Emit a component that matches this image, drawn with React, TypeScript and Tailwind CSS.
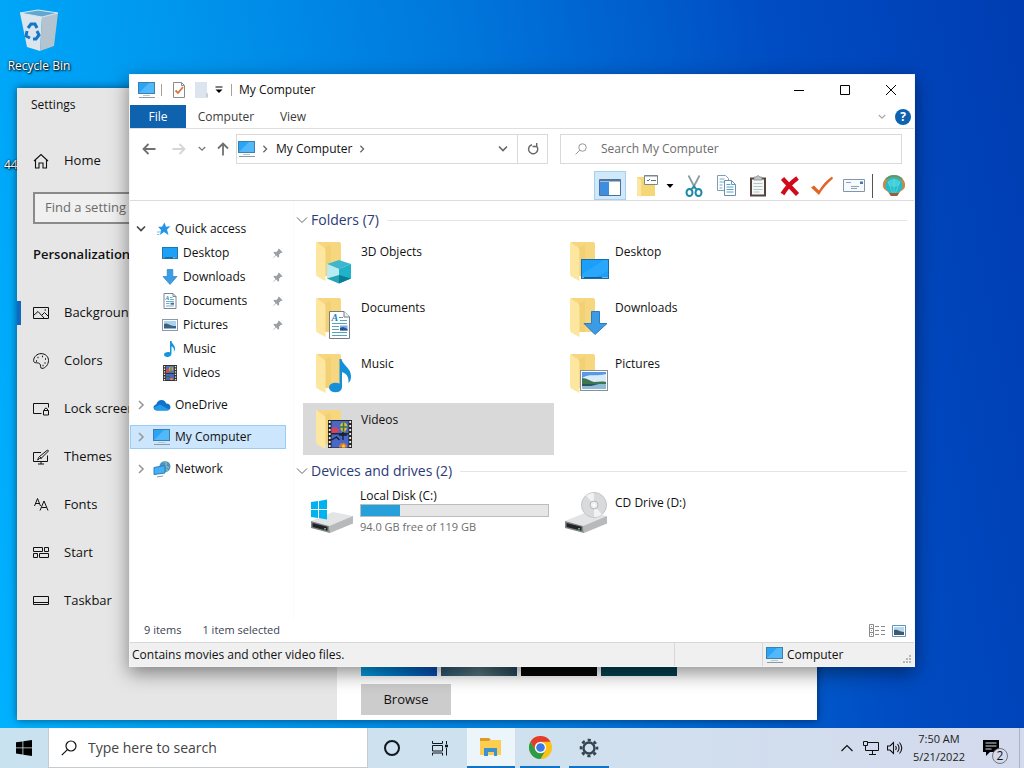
import type { ReactNode } from "react";

interface IconProps {
  className?: string;
}

function MonitorIcon({ className = "h-5 w-5" }: IconProps) {
  return (
    <svg viewBox="0 0 20 20" className={className} aria-hidden="true">
      <rect x="1.5" y="2.5" width="16" height="11" fill="#2aa5f5" stroke="#3f7fae" />
      <path d="M2 13 L12 3 H17 V13 Z" fill="#6cc5fb" opacity="0.6" />
      <path d="M6 15.5h7" stroke="#b9c6cf" />
      <path d="M2 17.5h16" stroke="#8b9aa5" />
    </svg>
  );
}

function Chevron({ className = "h-2 w-2", dir = "down" }: IconProps & { dir?: "down" | "right" }) {
  const paths = { down: "M1 2.5 5 6.5 9 2.5", right: "M3 1 7 5 3 9" };
  return (
    <svg viewBox="0 0 10 10" className={className} fill="none" stroke="currentColor" strokeWidth="1.6" aria-hidden="true">
      <path d={paths[dir]} />
    </svg>
  );
}

function Arrow({ rotate = "" }: { rotate?: string }) {
  return (
    <svg viewBox="0 0 14 14" className={`h-3.5 w-3.5 ${rotate}`} fill="none" stroke="currentColor" strokeWidth="1.8" aria-hidden="true">
      <path d="M13.5 7H1.5M6.5 2 1.5 7l5 5" />
    </svg>
  );
}

function SearchIcon({ className }: IconProps) {
  return (
    <svg viewBox="0 0 16 16" className={className} fill="none" stroke="currentColor" strokeWidth="1.2" aria-hidden="true">
      <circle cx="10" cy="6" r="5" />
      <path d="M6.4 9.6.8 15.2" />
    </svg>
  );
}

function PictureGlyph() {
  return (
    <>
      <rect x="0.5" y="2.5" width="15" height="11" fill="#fff" stroke="#8d9aa5" />
      <rect x="2" y="4" width="12" height="8" fill="#a9d3f2" />
      <path d="M2 7c3-2 5 2 12 2v3H2z" fill="#3f617c" />
      <path d="M2 11h12v1H2z" fill="#88b6d6" />
    </>
  );
}

function FilmGlyph() {
  return (
    <>
      <path d="M1 0h14v16H1z" fill="#333" />
      <path d="M4 1h8v7H4z" fill="#4b72c8" />
      <path d="M4 9h8v6H4z" fill="#4967bd" />
      <path d="M4 5l3-2 1 3-3 2H4z" fill="#cf4c55" />
      <ellipse cx="9" cy="4" rx="2" ry="2.4" fill="#e2b12f" />
      <path d="M9 1.6v5M4 12l3-1 1 2" stroke="#2d6d45" fill="none" />
      <path d="M8 15c0-3 3-3 3 0z" fill="#e8862e" />
      <path d="M2.5 1v15M13.5 1v15" stroke="#f2ecd6" strokeWidth="1.3" strokeDasharray="1.3 1.3" />
    </>
  );
}

function DocGlyph() {
  return (
    <>
      <path d="M2 .5h9L14 3.5v12H2z" fill="#fff" stroke="#7b8790" />
      <path d="M11 .5v3h3" fill="none" stroke="#7b8790" />
      <text x="3.2" y="7" fontSize="6" fontWeight="700" fontStyle="italic" fontFamily="Liberation Serif, serif" fill="#1d86c8">A</text>
      <path d="M8 4.5h2.5M8 6.5h4M4 8.5h8M4 10.5h3.5M4 13h8" stroke="#4f9cba" strokeWidth=".8" />
      <path d="M8.5 9.7h3.5v2H8.5z" fill="#3d6dae" />
    </>
  );
}

function NoteGlyph() {
  return <path d="M8 0h1.5c.4 3 3.5 4 3.5 7.5 0 1.4-.5 2.5-1.2 3.3C12.5 7.6 11 6 9.5 5.6V12.6C9.5 14.6 7.7 16 5.5 16S2 15 2 13.5 4 11 6 11c.8 0 1.5.1 2 .4z" fill="#1496dc" />;
}

function DownGlyph() {
  return <path d="M5.2.5h5.6v7H15L8 15.5 1 7.5h4.2z" fill="#3b9de4" stroke="#2d7fc2" strokeWidth=".7" />;
}

function DesktopGlyph() {
  return (
    <>
      <rect x="0.5" y="2.5" width="15" height="11" fill="#1ba1f7" stroke="#1a78b5" />
      <path d="M1 12.7h14" stroke="#15608f" />
      <path d="M1.5 12.7h1.2M11 12.7h3.5" stroke="#fff" strokeWidth=".8" strokeDasharray=".8 .5" />
    </>
  );
}

// Open folder with a glyph laid over its lower right corner
function FolderIcon({ children }: { children: ReactNode }) {
  return (
    <svg viewBox="0 0 48 48" className="h-12 w-12 shrink-0" aria-hidden="true">
      <path d="M8 5h22q2 0 2 2v32H16z" fill="#f6d77f" />
      <path d="M16 10v29h6V8z" fill="#eecb6a" opacity=".5" />
      <path d="M7 6q0-1 1-.6l7 5q1.5 1 1.5 3V44l-7.5-4q-2-1-2-3z" fill="#fde69f" />
      {children}
    </svg>
  );
}

function CubeOverlay() {
  return (
    <>
      <path d="M30 23l12 4-12 5-12-5z" fill="#3fb6cf" />
      <path d="M18 27l12 5v14.5l-12-5z" fill="#b5ebf2" />
      <path d="M42 27l-12 5v14.5l12-5z" fill="#1fb2c9" />
      <path d="M18 41.5l12-3.500v8.500z" fill="#27a3b5" />
      <path d="M42 41.5l-12-3.500v8.500z" fill="#087f96" />
    </>
  );
}

function DocumentOverlay() {
  return (
    <>
      <path d="M20.5 18.5H35l5.5 5.5v21.5h-20z" fill="#fff" stroke="#737d85" />
      <path d="M35 18.5V24h5.5" fill="#eef2f5" stroke="#737d85" />
      <text x="22.5" y="28" fontSize="10" fontWeight="700" fontStyle="italic" fontFamily="Liberation Serif, serif" fill="#2481b6">A</text>
      <path d="M30 24.5h4M31 27.5h7M23 30.5h15M23 33.5h7M23 36.5h7M23 39.5h15M23 42.5h15" stroke="#5aa3b4" />
      <path d="M31 32.5h7.5v5H31z" fill="#75aee4" />
      <path d="M31 35l3-1 4.5 2v1.5H31z" fill="#29548c" />
    </>
  );
}

function PictureOverlay() {
  return (
    <>
      <rect x="17.5" y="21.5" width="27" height="20" fill="#fff" stroke="#83909b" />
      <rect x="19" y="23" width="24" height="17" fill="#5a98e6" />
      <path d="M19 29c8-5 12-1 24-4v9H19z" fill="#d7ebf9" />
      <path d="M19 29c5 0 8 3 12 4 4 0 7-1 12 0v3H19z" fill="#3d7650" />
      <path d="M19 35h24v5H19z" fill="#8dbcd6" />
      <path d="M19 35h17l-8 2h-9z" fill="#2e5360" />
    </>
  );
}

function DesktopOverlay() {
  return (
    <>
      <rect x="18.5" y="22.5" width="27" height="19" fill="#1b9ffb" stroke="#176ea5" />
      <path d="M19 41V37L41 23h4v11L31 41z" fill="#33aefc" opacity=".6" />
      <path d="M19 40.5h26" stroke="#155e8e" />
      <path d="M19.5 40.5h1M39.5 40.5h5" stroke="#fff" strokeDasharray="1 1" />
    </>
  );
}

function NoteOverlay() {
  return (
    <>
      <ellipse cx="26.5" cy="38.500" rx="6.500" ry="4.800" fill="#148fd9" />
      <path d="M30.500 10h2c1 6 9.500 9 9.500 17 0 3-.5 5-2.500 7 .500-6-2-9.500-6.500-11v15h-2.500z" fill="#148fd9" />
    </>
  );
}

function FilmOverlay() {
  return (
    <>
      <path d="M19 15h24v28H19z" fill="#25252c" />
      <path d="M22.5 16h17v12h-17zM22.5 29.5h17v13h-17z" fill="#4669c8" />
      <path d="M22.5 23l5-1 3 4-4 2h-4z" fill="#d9435a" />
      <path d="M34.5 17.5c4 0 5 5 1.5 9h-3c-3-4-2-9 1.5-9z" fill="#e5bd34" />
      <path d="M34.5 17.5v9M31 22h7" stroke="#347648" strokeWidth="1.5" />
      <path d="M30 30h8M34 27v8M22.5 35l5-3 3 3" stroke="#1b1b24" strokeWidth="1.3" fill="none" />
      <path d="M30 42.5c0-6 8-6 8 0z" fill="#e4782f" />
      <path d="M33 42.5c0-4 3-4 3 0z" fill="#f0d23c" />
      <path d="M20.7 16v27M41.2 16v27" stroke="#f2ecd6" strokeWidth="1.8" strokeDasharray="2 2" />
    </>
  );
}

function DriveBase() {
  return (
    <>
      <path d="M2 34 24 25l20 4-24 10z" fill="#e3e4e5" />
      <path d="M20 39 44 29v7.500L21 46z" fill="#b7b9ba" />
      <path d="M2 34l18 5 1 7-19-5z" fill="#83878a" />
      <path d="M3.500 36l15 3.800v4l-15-3.800z" fill="#202426" />
      <path d="M16 41v1.500" stroke="#7fe08e" strokeWidth="1.5" />
    </>
  );
}

const folders = [
  { name: "3D Objects", overlay: <CubeOverlay /> },
  { name: "Desktop", overlay: <DesktopOverlay /> },
  { name: "Documents", overlay: <DocumentOverlay /> },
  { name: "Downloads", overlay: <path d="M28.5 18.5h8v12H44l-12 11-11-11h7.500z" fill="#3c9be5" stroke="#2c7dbf" /> },
  { name: "Music", overlay: <NoteOverlay /> },
  { name: "Pictures", overlay: <PictureOverlay /> },
  { name: "Videos", overlay: <FilmOverlay />, selected: true },
];

const quickAccess = [
  { name: "Desktop", icon: <DesktopGlyph />, pinned: true },
  { name: "Downloads", icon: <DownGlyph />, pinned: true },
  { name: "Documents", icon: <DocGlyph />, pinned: true },
  { name: "Pictures", icon: <PictureGlyph />, pinned: true },
  { name: "Music", icon: <NoteGlyph />, pinned: false },
  { name: "Videos", icon: <FilmGlyph />, pinned: false },
];

const settingsItems = [
  { name: "Background", icon: <path d="M.5 2.5h15v11H.5zM.5 10.5 5 6.5l6 6.5M9 10l2.5-2.500 4 4M11.5 5h1.5" /> },
  {
    name: "Colors",
    icon: (
      <>
        <path d="M8 .6C12.5.6 15.5 3.7 15.5 7.5S12.5 15.4 9 15.4C6.5 15.4 8.5 12 6.5 10.5S.6 11 .6 7.500 4 .6 8 .6z" />
        <path d="M4.5 4.500h1M9 3.500h1M12 6h1M11.5 10h1M3 8h1M9.500 12.500h1" strokeWidth="1.500" />
      </>
    ),
  },
  { name: "Lock screen", icon: <path d="M8.5 12.500H.5v-10h15v4M10.500 9.500h5v4.500h-5zM11.500 9.500V8q1.500-2 3 0v1.500M3 12.500h5" /> },
  { name: "Themes", icon: <path d="M8 3.500H.5v9h14v-6M5 15h6M8 12.500V15M14.500 1l1 1-7 7-2 .5-2 1.500c1-1 .5-2.500 2-3.500zM6.500 7.500l2 2" /> },
  { name: "Fonts", icon: <path d="M1.500 9 4.500 1.500 7.500 9M2.500 6.500h4M7 13.500l4-9.500 4 9.500M8.500 10.500h5" /> },
  { name: "Start", icon: <path d="M.5 2.500h9v4h-9zM11.500 2.500h4v4h-4zM.5 8.500h4v4h-4zM6.500 8.500h9v4h-9z" /> },
  { name: "Taskbar", icon: <path d="M.5 3.500h15v8H.5zM.5 9.500h15" /> },
];

function SettingsWindow() {
  return (
    <section aria-label="Settings" className="absolute top-[88px] right-[207px] bottom-2 left-[17px] flex overflow-hidden bg-white text-[13px] shadow-[0_0_8px_rgba(0,0,0,0.5)]">
      <aside className="w-80 shrink-0 bg-[#e6e6e6]">
        <h1 className="h-[34px] pl-3.5 text-xs leading-[34px]">Settings</h1>
        <button type="button" className="mt-[15px] flex h-12 w-full items-center gap-[15px] pl-4">
          <svg viewBox="0 0 16 16" className="h-4 w-4" fill="none" stroke="currentColor" strokeWidth="1.1" aria-hidden="true">
            <path d="M1 8 8 1.500 15 8M2.500 7v8H6v-5h4v5h3.500V7" />
          </svg>
          Home
        </button>
        <div className="mt-[7px] px-4">
          <input aria-label="Find a setting" placeholder="Find a setting" className="h-8 w-full border-2 border-[#8a8a8a] bg-[#f0f0f0] px-2.5 pb-0.5 placeholder:text-[#6b6b6b]" />
        </div>
        <h2 className="mt-5 pl-4 leading-5 font-semibold">Personalization</h2>
        <ul className="mt-[25px]">
          {settingsItems.map((item, index) => (
            <li key={item.name}>
              <button type="button" className="relative flex h-12 w-full items-center gap-[15px] pl-4">
                {index === 0 && <span className="absolute left-0 h-6 w-1 bg-[#1067c4]" />}
                <svg viewBox="0 0 16 16" className="h-4 w-4" fill="none" stroke="currentColor" aria-hidden="true">
                  {item.icon}
                </svg>
                {item.name}
              </button>
            </li>
          ))}
        </ul>
      </aside>
      <div className="flex flex-1 flex-col justify-end gap-2 pb-[5px] pl-6">
        <div className="flex gap-1">
          <div className="h-[76px] w-[76px] bg-linear-to-r from-[#06a0e4] to-[#084cb4]" />
          <div className="h-[76px] w-[76px] bg-linear-to-r from-[#2c5872] via-[#57767c] to-[#29475a]" />
          <div className="h-[76px] w-[76px] bg-[#040605]" />
          <div className="h-[76px] w-[76px] bg-[#04414f]" />
        </div>
        <button type="button" className="h-[31px] w-[90px] bg-[#ccc]">
          Browse
        </button>
      </div>
    </section>
  );
}

function TitleBar() {
  return (
    <header className="flex h-[30px] shrink-0 items-center pl-[7px]">
      <MonitorIcon />
      <span className="ml-1 h-3 w-px bg-[#a9a29b]" />
      <button type="button" aria-label="Properties" className="ml-[9px]">
        <svg viewBox="0 0 16 16" className="h-4 w-4" aria-hidden="true">
          <path d="M2.5.5h8l3 3v12h-11z" fill="#fff" stroke="#8b8b8b" />
          <path d="M10.5.5v3h3" fill="none" stroke="#8b8b8b" />
          <path d="M4.5 8.500 7 11l5-6" fill="none" stroke="#d9753d" strokeWidth="1.8" />
        </svg>
      </button>
      <button type="button" aria-label="New folder" className="ml-[7px]">
        <svg viewBox="0 0 16 16" className="h-4 w-4" aria-hidden="true">
          <path d="M1 0h12v10l1 2v4H1z" fill="#dce4ef" />
          <path d="M12 11v4h2v-3z" fill="#c4cedb" />
        </svg>
      </button>
      <button type="button" aria-label="Customize toolbar" className="ml-[5px]">
        <svg viewBox="0 0 8 8" className="h-2 w-2" aria-hidden="true">
          <path d="M.5 1h7" stroke="#000" />
          <path d="M.5 3.500h7L4 7z" />
        </svg>
      </button>
      <span className="ml-2 h-3 w-px bg-[#a9a29b]" />
      <h2 className="ml-[7px] text-xs">My Computer</h2>
      <div className="ml-auto flex h-full">
        <button type="button" aria-label="Minimize" className="flex w-[46px] items-center justify-center">
          <svg viewBox="0 0 10 10" className="h-2.5 w-2.5" stroke="#000"><path d="M0 5.500h10" /></svg>
        </button>
        <button type="button" aria-label="Maximize" className="flex w-[46px] items-center justify-center">
          <svg viewBox="0 0 10 10" className="h-2.5 w-2.5" fill="none" stroke="#000"><path d="M.5.5h9v9h-9z" /></svg>
        </button>
        <button type="button" aria-label="Close" className="flex w-[46px] items-center justify-center">
          <svg viewBox="0 0 10 10" className="h-2.5 w-2.5" stroke="#000"><path d="M0 0l10 10M10 0 0 10" /></svg>
        </button>
      </div>
    </header>
  );
}

function AddressRow() {
  return (
    <div className="flex h-[30px] shrink-0 items-center pr-3 pl-3">
      <button type="button" aria-label="Back" className="text-[#707070]"><Arrow /></button>
      <button type="button" aria-label="Forward" className="ml-4 text-[#d5d5d5]"><Arrow rotate="rotate-180" /></button>
      <button type="button" aria-label="Recent locations" className="ml-3 text-[#777]"><Chevron /></button>
      <button type="button" aria-label="Up" className="ml-2.5 text-[#707070]"><Arrow rotate="rotate-90" /></button>
      <div className="ml-1.5 flex h-full flex-1 items-center border border-[#d9d9d9]">
        <MonitorIcon />
        <span className="ml-1 text-[#666]"><Chevron dir="right" /></span>
        <a href="#my-computer" className="ml-[7px] text-xs">My Computer</a>
        <span className="ml-1.5 text-[#666]"><Chevron dir="right" /></span>
        <button type="button" aria-label="Previous locations" className="mr-[9px] ml-auto text-[#666]"><Chevron className="h-2.5 w-2.5" /></button>
        <button type="button" aria-label="Refresh" className="flex h-full w-[30px] items-center justify-center border-l border-[#d9d9d9]">
          <svg viewBox="0 0 12 12" className="h-3 w-3" fill="none" stroke="#666" strokeWidth="1.4" aria-hidden="true">
            <path d="M9.5 3A4.600 4.600 0 1 1 5 1.700M5.500 3.500h4.200V0" />
          </svg>
        </button>
      </div>
      <label className="ml-3 flex h-full w-[342px] items-center border border-[#d9d9d9] pl-3.5 text-[#8a8a8a]">
        <SearchIcon className="h-3 w-3" />
        <input aria-label="Search My Computer" placeholder="Search My Computer" className="ml-3.5 min-w-0 flex-1 text-xs placeholder:text-[#6d6d6d]" />
      </label>
    </div>
  );
}

function ToolButton({ label, children }: { label: string; children: ReactNode }) {
  return (
    <button type="button" aria-label={label} className="flex h-full w-8 items-center justify-center">
      <svg viewBox="0 0 24 24" className="h-6 w-6" aria-hidden="true">{children}</svg>
    </button>
  );
}

function Toolbar() {
  return (
    <div className="mt-[7px] flex h-[30px] shrink-0 items-center justify-end border-b border-[#dcdcdc] pr-1">
      <button type="button" aria-label="Navigation pane" className="mr-1.5 flex h-full w-8 items-center justify-center border border-[#a5d0ee] bg-[#cfe8fa]">
        <svg viewBox="0 0 24 24" className="h-6 w-6" aria-hidden="true">
          <path d="M1.500 5.500h21v16h-21z" fill="#fff" stroke="#4e6f96" />
          <path d="M1.500 5.500h21v2h-21z" fill="#55789f" />
          <path d="M2 8h9v13H2z" fill="#3d8de0" />
        </svg>
      </button>
      <ToolButton label="Folder options">
        <path d="M1 3h18v19H1z" fill="#f6d775" />
        <path d="M1 3l4 3v17l-4-2z" fill="#fbe8a5" />
        <path d="M8.500 1.500h13v9h-13z" fill="#fff" stroke="#7b8791" />
        <path d="M8.500 2h13" stroke="#7b8791" />
        <path d="M11 6l1 1 2-2M15 6.500h5" fill="none" stroke="#5a6d80" />
      </ToolButton>
      <button type="button" aria-label="Folder menu" className="mr-0.5 flex w-3 justify-center">
        <svg viewBox="0 0 8 8" className="h-2 w-2" aria-hidden="true"><path d="M.5 2h7L4 6z" /></svg>
      </button>
      <ToolButton label="Cut">
        <path d="M6.500 1.500l7 13.500M17.500 1.500l-7 13.500" stroke="#8b9ba6" strokeWidth="1.800" fill="none" />
        <ellipse cx="7.500" cy="18.500" rx="3" ry="3.500" fill="none" stroke="#1d8ba8" strokeWidth="2" />
        <ellipse cx="16.500" cy="18.500" rx="3" ry="3.500" fill="none" stroke="#1d8ba8" strokeWidth="2" />
        <path d="M9 16l3-4 3 4" fill="none" stroke="#1d8ba8" strokeWidth="1.500" />
      </ToolButton>
      <ToolButton label="Copy">
        <path d="M3.500 1.500h8l3 3v12h-11z" fill="#fff" stroke="#819db5" />
        <path d="M5.500 5h5M5.500 8h5M5.500 11h3M5.500 14h3" stroke="#6faed0" />
        <path d="M10.500 6.500h7l4 4v11h-11z" fill="#fff" stroke="#6f8da8" />
        <path d="M17.500 6.500v4h4M12.500 10.500h4M12.500 13h7M12.500 15.500h7M12.500 18h7" fill="none" stroke="#5b9fc5" />
      </ToolButton>
      <ToolButton label="Paste">
        <path d="M4 3.500h16v19H4z" fill="#55443b" />
        <path d="M6 5.500h12v15H6z" fill="#f4f7f6" />
        <path d="M7.500 9.500h9M7.500 12.500h9M7.500 15.500h9M7.500 18h6" stroke="#b4c6c5" />
        <path d="M8 3h2q2-3 4 0h2v3H8z" fill="#bfc4c7" stroke="#7c8285" strokeWidth=".7" />
      </ToolButton>
      <ToolButton label="Delete">
        <path d="M4.500 4.500l15 16M19.500 4Q10 11 4.500 20" stroke="#d1091b" strokeWidth="4.400" fill="none" />
      </ToolButton>
      <ToolButton label="Properties">
        <path d="M1 13.500l3-2 5 5Q14 8 22 2.500l1 2Q14 12 9 21z" fill="#e36425" />
      </ToolButton>
      <ToolButton label="E-mail">
        <path d="M1.500 5.500h21v12h-21z" fill="#f7fafc" stroke="#8296a7" />
        <path d="M18 7.500h3v2.500h-3z" fill="#4477b4" />
        <path d="M4 8.500h5M9 12.500h8M9 14.500h6" stroke="#8ca2b6" />
      </ToolButton>
      <span className="mr-[5px] ml-0.5 h-6 w-px bg-[#555]" />
      <ToolButton label="Classic Shell">
        <path d="M12 1C5 1 0 7 1 12c0 3 3 4 5 6l3 4h6l3-4c2-2 5-3 5-6 1-5-4-11-11-11z" fill="#c58b4e" />
        <path d="M4 5q8-6 16 0" fill="none" stroke="#4e9f70" strokeWidth="2" />
        <ellipse cx="12" cy="11.500" rx="8.500" ry="8" fill="#22bccb" />
        <ellipse cx="12" cy="9" rx="5.500" ry="4" fill="#5cdde2" opacity=".6" />
        <path d="M12 20V5M10.500 19 6 7M13.500 19 18 7" stroke="#77dfe3" strokeWidth=".6" fill="none" />
        <path d="M7 19h10l-2 3H9z" fill="#946234" />
      </ToolButton>
    </div>
  );
}

function NavTree() {
  return (
    <nav aria-label="Navigation pane" className="w-[163px] shrink-0 pt-4 text-xs">
      <button type="button" className="flex h-6 w-full items-center pl-1.5">
        <span className="text-[#444]"><Chevron className="h-2.5 w-2.5" /></span>
        <svg viewBox="0 0 16 16" className="mr-[3px] ml-2.5 h-4 w-4" aria-hidden="true">
          <path d="M8.5 1.500l1.500 4.300 4.500-.5-3.500 3.300 1.500 5.400-4.500-3-4 3L5 9 2 5.800h4z" fill="#2595e8" />
          <path d="M1 11h4M1 13.500h2.500" stroke="#77bfef" />
        </svg>
        Quick access
      </button>
      <ul>
        {quickAccess.map((item) => (
          <li key={item.name}>
            <button type="button" className="flex h-6 w-full items-center gap-[5px] pr-2.5 pl-8">
              <svg viewBox="0 0 16 16" className="h-4 w-4 shrink-0" aria-hidden="true">
                {item.icon}
              </svg>
              {item.name}
              {item.pinned && (
                <svg viewBox="0 0 12 12" className="ml-auto h-[11px] w-[11px]" aria-hidden="true">
                  <path d="M7.500.5l4 4-1 1-.8-.2-2 2 .1 2.200-1 1-2.300-2.300-3.500 3.300.2-.7 2.700-3.200L1.500 5.200l1-1 2.300.1 2-2-.3-.8z" fill="#9aa1a6" />
                </svg>
              )}
            </button>
          </li>
        ))}
      </ul>
      <div className="mt-2 flex flex-col gap-2 pr-[7px]">
        <button type="button" className="flex h-6 items-center pl-1.5">
          <span className="text-[#999]"><Chevron dir="right" className="h-2.5 w-2.5" /></span>
          <svg viewBox="0 0 18 16" className="mr-1 ml-[7px] h-4 w-[18px]" aria-hidden="true">
            <path d="M4 13.500C1.500 13.500.5 12 .5 10.500S2 7.800 3.200 7.600C4 4.500 6 3 8.500 3s4 1.500 4.800 3.600c2.500 0 4.200 1.600 4.200 3.500s-1.500 3.400-3.500 3.400z" fill="#0f72c9" />
            <path d="M4 13.500c-2-.3-3-1.500-3-3l6-3 9 5c-.6.7-1.300 1-2 1z" fill="#249be9" />
          </svg>
          OneDrive
        </button>
        <button type="button" className="flex h-6 items-center border border-[#99cdf5] bg-[#cce6fd] pl-[5px]">
          <span className="text-[#999]"><Chevron dir="right" className="h-2.5 w-2.5" /></span>
          <MonitorIcon className="mr-[3px] ml-1.5 h-5 w-5" />
          My Computer
        </button>
        <button type="button" className="flex h-6 items-center pl-1.5">
          <span className="text-[#999]"><Chevron dir="right" className="h-2.5 w-2.5" /></span>
          <svg viewBox="0 0 18 18" className="mr-1 ml-[7px] h-[18px] w-[18px]" aria-hidden="true">
            <circle cx="12" cy="6.500" r="5.500" fill="#4b93c9" />
            <path d="M10 2c3-1 4 1 3 3s2 2 3 3M13 9l2 2" stroke="#8fc0a0" strokeWidth="1.300" fill="none" />
            <path d="M1 7.500l11-2v7.500L1 14.500z" fill="#45b1f4" stroke="#2c7fb8" />
            <path d="M4 17l6-1" stroke="#8b9aa5" />
          </svg>
          Network
        </button>
      </div>
    </nav>
  );
}

function GroupHeader({ children }: { children: ReactNode }) {
  return (
    <h3 className="flex h-[22px] items-center text-sm text-[#2b3a78]">
      <svg viewBox="0 0 12 12" className="mr-[3px] h-3 w-3" fill="none" stroke="#666" aria-hidden="true">
        <path d="M1 3.500l5 5 5-5" />
      </svg>
      {children}
      <span className="ml-2 h-px flex-1 bg-[#e2e5ea]" />
    </h3>
  );
}

function FileArea() {
  return (
    <main className="min-w-0 flex-1 overflow-hidden border-l border-[#fafafa] pt-2 pr-[7px] pl-0.5">
      <GroupHeader>Folders (7)</GroupHeader>
      <ul className="mt-1 grid grid-cols-[251px_251px] gap-x-[3px] gap-y-1 pl-[7px]">
        {folders.map((folder) => (
          <li key={folder.name}>
            <button type="button" className={`flex h-[52px] w-full items-start gap-1 pt-0.5 pl-1.5 text-left text-xs ${folder.selected ? "bg-[#d9d9d9]" : ""}`}>
              <FolderIcon>{folder.overlay}</FolderIcon>
              <span className="pt-[7px]">{folder.name}</span>
            </button>
          </li>
        ))}
      </ul>
      <div className="mt-[5px]">
        <GroupHeader>Devices and drives (2)</GroupHeader>
      </div>
      <div className="mt-[5px] grid grid-cols-[251px_251px] gap-x-[3px] pl-[7px]">
        <div className="flex h-[52px] gap-[3px] pr-[5px] pl-1.5 text-xs">
          <svg viewBox="0 0 48 52" className="h-[52px] w-12 shrink-0" aria-hidden="true">
            <DriveBase />
            <path d="M2 15l7-1v8H2zM10 14l8-1.500V22h-8zM2 23h7v8l-7-1zM10 23h8v9.500L10 31z" fill="#00b2ee" />
          </svg>
          <div className="flex-1">
            <p className="leading-[17px]">Local Disk (C:)</p>
            <div className="mb-px h-[13px] border border-[#bcbcbc] bg-[#e6e6e6]">
              <div className="h-full bg-[#26a0da]" style={{ width: `${((119 - 94) / 119) * 100}%` }} />
            </div>
            <p className="text-[11px] leading-[17px] text-[#6d6d6d]">94.0 GB free of 119 GB</p>
          </div>
        </div>
        <div className="flex h-[52px] gap-1 pl-1.5 text-xs">
          <svg viewBox="0 0 48 52" className="h-[52px] w-12 shrink-0" aria-hidden="true">
            <DriveBase />
            <circle cx="31" cy="18" r="12.500" fill="#d8dadb" stroke="#c3c5c6" />
            <path d="M31 18 23 8.500A12 12 0 0 1 31 6zM31 18l8 9.500A12 12 0 0 1 31 30z" fill="#f1f2f2" />
            <circle cx="31" cy="18" r="4" fill="#eee" stroke="#b5b7b8" />
            <circle cx="31" cy="18" r="1.500" fill="#fff" />
          </svg>
          <p className="pt-[7px] leading-[17px]">CD Drive (D:)</p>
        </div>
      </div>
    </main>
  );
}

function ExplorerWindow() {
  return (
    <section aria-label="My Computer" className="absolute top-[74px] right-[109px] bottom-[61px] left-[129px] flex flex-col border border-[#f4f4f4] bg-white shadow-[0_6px_18px_rgba(0,0,0,0.45)]">
      <TitleBar />
      <div className="flex h-6 shrink-0 items-center border-b border-[#dedede] text-xs text-[#3c3c3c]">
        <button type="button" className="h-full w-14 bg-[#0f62ae] text-white">File</button>
        <button type="button" className="h-full w-20">Computer</button>
        <button type="button" className="h-full w-[54px]">View</button>
        <button type="button" aria-label="Expand ribbon" className="mr-[9px] ml-auto text-[#aaa]"><Chevron /></button>
        <button type="button" aria-label="Help" className="mr-[3px] h-4 w-4 rounded-full bg-[#0f62ae] text-xs leading-4 font-bold text-white">?</button>
      </div>
      <div className="mt-[5px]">
        <AddressRow />
      </div>
      <Toolbar />
      <div className="flex min-h-0 flex-1">
        <NavTree />
        <FileArea />
      </div>
      <div className="flex h-[23px] shrink-0 items-center pr-2 pl-3.5 text-[11px] text-[#3b4254]">
        <span>9 items</span>
        <span className="ml-[21px]">1 item selected</span>
        <button type="button" aria-label="Details view" className="ml-auto">
          <svg viewBox="0 0 16 13" className="h-[13px] w-4" fill="none" stroke="#8a8a8a" aria-hidden="true">
            <path d="M.5.5h4v12h-4zM.5 4.500h4M.5 8.500h4M2 2.500h1M2 6.500h1M2 10.500h1M6 2.500h4M12 2.500h4M6 6.500h4M12 6.500h4M6 10.500h4M12 10.500h4" />
          </svg>
        </button>
        <button type="button" aria-label="Large icons view" className="ml-[7px]">
          <svg viewBox="0 0 14 12" className="h-3 w-3.5" aria-hidden="true">
            <path d="M.5.5h13v11H.5z" fill="#fff" stroke="#5d94be" />
            <path d="M2 2h10v8H2z" fill="#b5d8ee" />
            <path d="M2 5c4-1 5 2 10 2v3H2z" fill="#41596d" />
          </svg>
        </button>
      </div>
      <footer className="flex h-6 shrink-0 items-center border-t border-[#d7d7d7] bg-[#f0f0f0] text-xs">
        <p className="pl-0.5">Contains movies and other video files.</p>
        <div className="ml-auto h-full w-[88px] border-l border-[#d7d7d7]" />
        <div className="relative flex h-full w-[152px] items-center gap-0.5 border-l border-[#d7d7d7] pl-0.5">
          <MonitorIcon />
          Computer
          <svg viewBox="0 0 9 9" className="absolute right-0.5 bottom-0.5 h-[9px] w-[9px]" fill="#b7b7b7" aria-hidden="true">
            <path d="M6 0h2v2H6zM3 3h2v2H3zM6 3h2v2H6zM0 6h2v2H0zM3 6h2v2H3zM6 6h2v2H6z" />
          </svg>
        </div>
      </footer>
    </section>
  );
}

function Taskbar() {
  return (
    <footer className="flex h-10 shrink-0 items-stretch bg-linear-to-r from-[#c9e2ef] via-[#cfe1ef] to-[#d4daed]">
      <button type="button" aria-label="Start" className="flex w-12 items-center justify-center">
        <svg viewBox="0 0 16 16" className="h-4 w-4" aria-hidden="true">
          <path d="M0 2.300l6.500-.9v6.100H0zM7.300 1.300 16 0v7.500H7.300zM0 8.300h6.500v6.200L0 13.600zM7.300 8.300H16V16l-8.700-1.300z" />
        </svg>
      </button>
      <label className="flex w-80 items-center border-x border-b border-[#c5ccd0] bg-white pl-3">
        <SearchIcon className="h-4 w-4" />
        <input aria-label="Type here to search" placeholder="Type here to search" className="ml-[11px] min-w-0 flex-1 text-sm placeholder:text-[#444]" />
      </label>
      <button type="button" aria-label="Cortana" className="flex w-12 items-center justify-center">
        <span className="h-4 w-4 rounded-full border-2 border-[#101820]" />
      </button>
      <button type="button" aria-label="Task View" className="mr-[3px] flex w-12 items-center justify-center">
        <svg viewBox="0 0 16 16" className="h-4 w-4" fill="none" stroke="#101820" aria-hidden="true">
          <path d="M.5 1v2.500h10V1M.5 15.500V13h10v2.500M.5 5.500h10v5.500H.5zM14.500 1v3M14.500 8v7.500" />
          <path d="M13.500 5h2v2h-2z" fill="#101820" />
        </svg>
      </button>
      <button type="button" aria-label="File Explorer" className="flex w-12 items-center justify-center border-b-2 border-[#0f74c8] bg-[#ecf5fa]">
        <svg viewBox="0 0 22 18" className="h-[18px] w-[22px]" aria-hidden="true">
          <path d="M0 0h9l2 2v3H0z" fill="#dc9b27" />
          <path d="M0 3h9l1-1h11v15H0z" fill="#fbce52" />
          <path d="M4 10h13v8h-3v-4H8v4H4z" fill="#3e91cf" />
        </svg>
      </button>
      <button type="button" aria-label="Google Chrome" className="ml-px flex w-12 flex-col items-center">
        <span className="flex flex-1 items-center pt-px">
          <svg viewBox="0 0 24 24" className="h-[23px] w-[23px]" aria-hidden="true">
            <circle cx="12" cy="12" r="12" fill="#fbc116" />
            <path d="M1.600 6A12 12 0 0 1 22.400 6H12a6 6 0 0 0-5.200 9z" fill="#e33b2e" />
            <path d="M1.600 6A12 12 0 0 0 12 24l5.200-9A6 6 0 0 1 6.800 15z" fill="#2a9c4a" />
            <circle cx="12" cy="12" r="5.800" fill="#fff" />
            <circle cx="12" cy="12" r="4.500" fill="#3b78e7" />
          </svg>
        </span>
        <span className="h-0.5 w-10 bg-[#0f74c8]" />
      </button>
      <button type="button" aria-label="Settings" className="ml-px flex w-12 flex-col items-center">
        <span className="flex flex-1 items-center pt-px">
          <svg viewBox="0 0 20 20" className="h-5 w-5" fill="none" stroke="#36444f" aria-hidden="true">
            <circle cx="10" cy="10" r="5.500" strokeWidth="2.400" />
            <circle cx="10" cy="10" r="8" strokeWidth="2.600" strokeDasharray="3.140 3.143" strokeDashoffset="1.570" />
          </svg>
        </span>
        <span className="h-0.5 w-10 bg-[#0f74c8]" />
      </button>
      <div className="ml-auto flex items-center">
        <button type="button" aria-label="Show hidden icons" className="mr-2.5">
          <svg viewBox="0 0 12 12" className="h-3 w-3" fill="none" stroke="#111" strokeWidth="1.200" aria-hidden="true"><path d="M.5 9 6 3.500 11.500 9" /></svg>
        </button>
        <button type="button" aria-label="Network" className="mr-2">
          <svg viewBox="0 0 16 16" className="h-4 w-4" fill="none" stroke="#111" aria-hidden="true">
            <path d="M4.500 2.500h11v8h-11M9.500 10.500v4M6 14.500h7M.5 1.500h4v4h-4zM2.500 5.500v5h3" />
          </svg>
        </button>
        <button type="button" aria-label="Volume" className="mr-2.5">
          <svg viewBox="0 0 16 16" className="h-4 w-4" fill="none" stroke="#111" strokeWidth="1.100" aria-hidden="true">
            <path d="M.5 6h2.500L6.500 2.500v11L3 10H.5zM8.500 6q1.500 2 0 4M10.500 4q3 4 0 8M12.500 2.500q4.500 5.500 0 11" />
          </svg>
        </button>
        <button type="button" className="text-center text-[11px] leading-[18px] text-[#222]">
          7:50 AM
          <br />
          5/21/2022
        </button>
        <button type="button" aria-label="2 notifications" className="relative mr-[13px] ml-[17px] h-6 w-6">
          <svg viewBox="0 0 24 24" className="h-6 w-6" aria-hidden="true">
            <path d="M1 4h16v12H8l-4 4v-4H1z" />
            <path d="M3.500 7h11M3.500 10h11M3.500 13h6" stroke="#d4daed" />
          </svg>
          <span className="absolute -right-0.5 -bottom-1 h-4 w-4 rounded-full border border-[#777] bg-[#d4daed] text-xs leading-[14px]">2</span>
        </button>
        <button type="button" aria-label="Show desktop" className="h-10 w-[5px] border-l border-[#aab6c8]" />
      </div>
    </footer>
  );
}

export default function App() {
  return (
    <div className="flex h-screen flex-col overflow-hidden bg-linear-[80deg,#00b2ff_0%,#0099f0_24%,#0078dc_50%,#004cc2_78%,#003cb2_100%] font-['Open_Sans','Noto_Sans',sans-serif] text-[#111]">
      <div className="relative min-h-0 flex-1 overflow-hidden">
        <a href="#recycle-bin" className="absolute top-2 left-1 flex w-[70px] flex-col items-center gap-0.5 text-xs text-white [text-shadow:1px_1px_2px_#000,0_0_2px_#000]">
          <svg viewBox="0 0 48 48" className="h-12 w-12" aria-hidden="true">
            <path d="M5 5l22 4-2 34-13-4z" fill="#dbe5ed" />
            <path d="M27 9 43 5l-4 33-14 5z" fill="#b3c3cf" />
            <path d="M5 5l18-3 20 3-16 4z" fill="#63a7d1" stroke="#dbe9f3" />
            <path d="M13 20l3-4h4l2 4M22 23l2 4-3 4h-3M15 30l-4-2 1-5" fill="none" stroke="#1577c7" strokeWidth="3" />
          </svg>
          <span>Recycle Bin</span>
        </a>
        <a href="#44" className="absolute top-[157px] left-1 text-xs text-white [text-shadow:1px_1px_2px_#000,0_0_2px_#000]">44</a>
        <SettingsWindow />
        <ExplorerWindow />
      </div>
      <Taskbar />
    </div>
  );
}
